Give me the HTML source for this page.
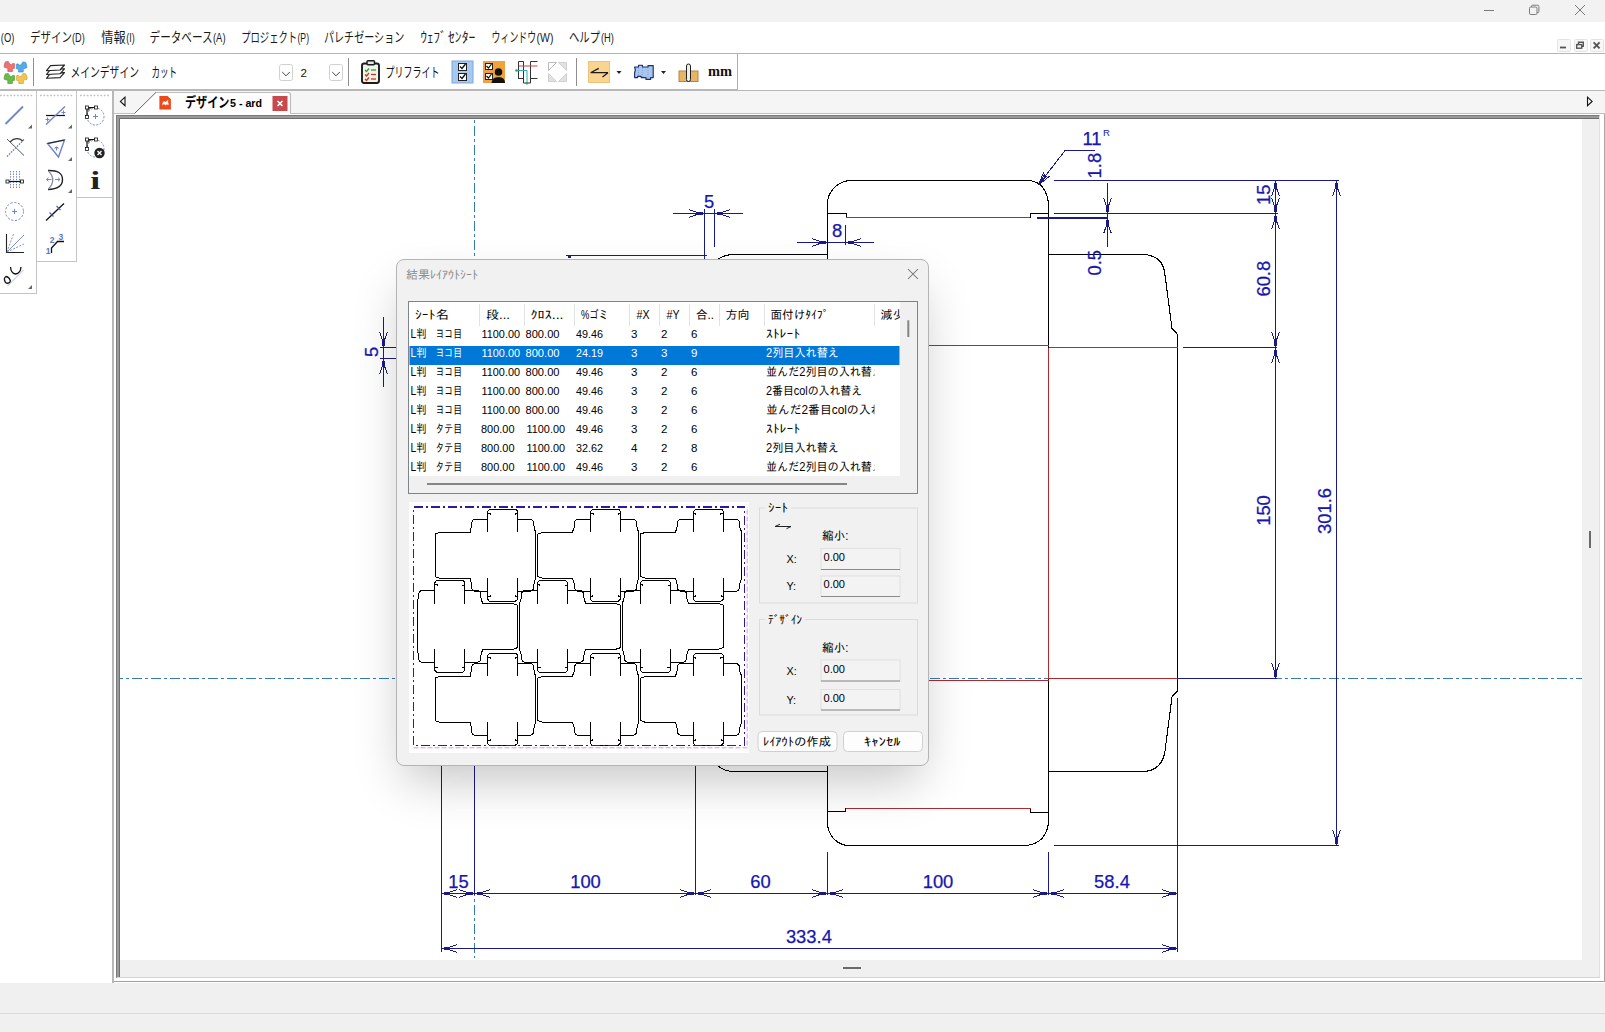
<!DOCTYPE html>
<html lang="ja"><head><meta charset="utf-8"><title>ArtiosCAD</title>
<style>
html,body{margin:0;padding:0;}
body{width:1605px;height:1032px;position:relative;overflow:hidden;background:#fff;font-family:"Liberation Sans","Noto Sans CJK JP",sans-serif;font-size:12px;color:#000;}
div,svg{position:absolute;box-sizing:border-box;}
svg{overflow:visible}
svg text{white-space:pre}
</style></head><body>

<div id="titlebar" style="left:0;top:0;width:1605px;height:22px;background:#f2f2f2"></div>
<div id="menubar" style="left:0;top:22px;width:1605px;height:32px;background:#fff;border-bottom:1px solid #b4b4b4"></div>
<div id="toolbar" style="left:0;top:54px;width:738px;height:37px;background:#fff;border-right:1px solid #b0b0b0;border-bottom:2px solid #b8b8b8"></div>
<div id="toolbar-r" style="left:738px;top:54px;width:867px;height:37px;background:#fff;border-bottom:1px solid #b8b8b8"></div>
<div id="lp1" style="left:0;top:91px;width:37px;height:203px;background:#fff;border-right:1px solid #c4c4c4;border-bottom:1px solid #c4c4c4"></div>
<div id="lp2" style="left:37px;top:91px;width:40px;height:171px;background:#fff;border-right:1px solid #c4c4c4;border-bottom:1px solid #c4c4c4"></div>
<div id="lp3" style="left:77px;top:91px;width:35px;height:107px;background:#fff;border-bottom:1px solid #c4c4c4"></div>
<div id="lpsep" style="left:112px;top:91px;width:2px;height:892px;background:#b8b8b8"></div>
<div id="tabstrip" style="left:114px;top:91px;width:1491px;height:23px;background:#f5f5f5;border-bottom:1px solid #c0c0c0"></div>
<div id="mdi" style="left:114px;top:114px;width:1491px;height:868px;background:#fff;border-right:1px solid #a8a8a8;border-bottom:1px solid #a0a0a0"></div>
<div id="frame" style="left:116px;top:115px;width:1484px;height:863px;background:#f0f0f0;border:1px solid #7a7a7a;border-right-color:#e0e0e0;border-bottom-color:#d4d4d4"></div>
<div id="frame2" style="left:117px;top:116px;width:1482px;height:861px;background:#f0f0f0;border-top:3px solid #9a9a9a;border-left:3px solid #9a9a9a"></div>
<div id="frame3" style="left:119px;top:118px;width:1480px;height:859px;background:#f0f0f0;border-top:1px solid #6e6e6e;border-left:1px solid #6e6e6e"></div>
<div id="canvas" style="left:120px;top:119px;width:1462px;height:841px;background:#fff;overflow:hidden"></div>
<div style="left:1589px;top:531px;width:2px;height:17px;background:#6a6a6a"></div>
<div style="left:843px;top:967px;width:18px;height:2px;background:#6a6a6a"></div>
<div id="status1" style="left:0;top:983px;width:1605px;height:31px;background:#f0f0f0;border-bottom:1px solid #d8d8d8"></div>
<div id="status2" style="left:0;top:1014px;width:1605px;height:18px;background:#f0f0f0"></div>
<svg id="chrome" width="1605" height="1032" viewBox="0 0 1605 1032" style="left:0;top:0"><g stroke="#7a7a7a" stroke-width="1" fill="none"><path d="M1484 10.5H1494"/><rect x="1529.5" y="7" width="7.5" height="7.5" rx="1.3"/><path d="M1531.5 7V6.3Q1531.5 5.2 1532.6 5.2H1537.7Q1538.9 5.2 1538.9 6.4V11.5Q1538.9 12.6 1537.8 12.6H1537"/><path d="M1575 5L1585 15M1585 5L1575 15"/></g>
<rect x="1557.5" y="39.5" width="13" height="12" rx="1" fill="#f7f7f7" stroke="#e4e4e4"/>
<rect x="1574.5" y="39.5" width="13" height="12" rx="1" fill="#f7f7f7" stroke="#e4e4e4"/>
<rect x="1590.5" y="39.5" width="13" height="12" rx="1" fill="#f7f7f7" stroke="#e4e4e4"/>
<rect x="1560" y="46.6" width="6" height="1.8" fill="#555"/>
<g fill="none" stroke="#555" stroke-width="1.4"><path d="M1578.5 44V42.2H1583.3V46.2H1581.8"/><rect x="1576.7" y="44.6" width="5" height="3.6"/></g>
<path d="M1593.6 42.4L1599.6 48.4M1599.6 42.4L1593.6 48.4" stroke="#555" stroke-width="1.9" fill="none"/>
<text x="0.8" y="41.8" font-size="12" fill="#1a1a1a" font-family='"Liberation Sans","Noto Sans CJK JP",sans-serif' font-weight="normal" text-anchor="start" textLength="13.5" lengthAdjust="spacingAndGlyphs">(O)</text>
<text x="30.0" y="41.8" font-size="13.5" fill="#1a1a1a" font-family='"Liberation Sans","Noto Sans CJK JP",sans-serif' font-weight="normal" text-anchor="start" textLength="42.0" lengthAdjust="spacingAndGlyphs">デザイン</text>
<text x="72.0" y="41.8" font-size="12" fill="#1a1a1a" font-family='"Liberation Sans","Noto Sans CJK JP",sans-serif' font-weight="normal" text-anchor="start" textLength="12.7" lengthAdjust="spacingAndGlyphs">(D)</text>
<text x="101.2" y="41.8" font-size="13.5" fill="#1a1a1a" font-family='"Liberation Sans","Noto Sans CJK JP",sans-serif' font-weight="normal" text-anchor="start" textLength="24.4" lengthAdjust="spacingAndGlyphs">情報</text>
<text x="126.2" y="41.8" font-size="12" fill="#1a1a1a" font-family='"Liberation Sans","Noto Sans CJK JP",sans-serif' font-weight="normal" text-anchor="start" textLength="8.4" lengthAdjust="spacingAndGlyphs">(I)</text>
<text x="149.6" y="41.8" font-size="13.5" fill="#1a1a1a" font-family='"Liberation Sans","Noto Sans CJK JP",sans-serif' font-weight="normal" text-anchor="start" textLength="63.0" lengthAdjust="spacingAndGlyphs">データベース</text>
<text x="213.0" y="41.8" font-size="12" fill="#1a1a1a" font-family='"Liberation Sans","Noto Sans CJK JP",sans-serif' font-weight="normal" text-anchor="start" textLength="12.5" lengthAdjust="spacingAndGlyphs">(A)</text>
<text x="241.2" y="41.8" font-size="13.5" fill="#1a1a1a" font-family='"Liberation Sans","Noto Sans CJK JP",sans-serif' font-weight="normal" text-anchor="start" textLength="56.0" lengthAdjust="spacingAndGlyphs">プロジェクト</text>
<text x="297.5" y="41.8" font-size="12" fill="#1a1a1a" font-family='"Liberation Sans","Noto Sans CJK JP",sans-serif' font-weight="normal" text-anchor="start" textLength="11.5" lengthAdjust="spacingAndGlyphs">(P)</text>
<text x="324.0" y="41.8" font-size="13.5" fill="#1a1a1a" font-family='"Liberation Sans","Noto Sans CJK JP",sans-serif' font-weight="normal" text-anchor="start" textLength="80.3" lengthAdjust="spacingAndGlyphs">パレチゼーション</text>
<text x="420.5" y="41.8" font-size="13.5" fill="#1a1a1a" font-family='"Liberation Sans","Noto Sans CJK JP",sans-serif' font-weight="normal" text-anchor="start" textLength="26.0" lengthAdjust="spacingAndGlyphs">ｳｪﾌﾞ</text>
<text x="448.0" y="41.8" font-size="13.5" fill="#1a1a1a" font-family='"Liberation Sans","Noto Sans CJK JP",sans-serif' font-weight="normal" text-anchor="start" textLength="27.4" lengthAdjust="spacingAndGlyphs">ｾﾝﾀｰ</text>
<text x="491.6" y="41.8" font-size="13.5" fill="#1a1a1a" font-family='"Liberation Sans","Noto Sans CJK JP",sans-serif' font-weight="normal" text-anchor="start" textLength="44.5" lengthAdjust="spacingAndGlyphs">ウィンドウ</text>
<text x="536.6" y="41.8" font-size="12" fill="#1a1a1a" font-family='"Liberation Sans","Noto Sans CJK JP",sans-serif' font-weight="normal" text-anchor="start" textLength="16.8" lengthAdjust="spacingAndGlyphs">(W)</text>
<text x="569.0" y="41.8" font-size="13.5" fill="#1a1a1a" font-family='"Liberation Sans","Noto Sans CJK JP",sans-serif' font-weight="normal" text-anchor="start" textLength="31.0" lengthAdjust="spacingAndGlyphs">ヘルプ</text>
<text x="601.0" y="41.8" font-size="12" fill="#1a1a1a" font-family='"Liberation Sans","Noto Sans CJK JP",sans-serif' font-weight="normal" text-anchor="start" textLength="13.0" lengthAdjust="spacingAndGlyphs">(H)</text>
<path d="M4.2 65.3L5.3 61.9L8.3 61.5L9.8 64.3L11.8 64.7L12.8 63.3L14.6 63.7L14.6 68.3L12.4 68.7L12.4 71.5L7.8 71.5L7.8 68.3L4.2 67.3Z" fill="#ea7472" stroke="#d05c5c" stroke-width="0.7" stroke-linejoin="round"/>
<path d="M26.8 65.8L25.7 62.4L22.7 62.0L21.2 64.8L19.2 65.2L18.2 63.8L16.4 64.2L16.4 68.8L18.6 69.2L18.6 72.0L23.2 72.0L23.2 68.8L26.8 67.8Z" fill="#56aae8" stroke="#3c8fd0" stroke-width="0.7" stroke-linejoin="round"/>
<path d="M4.2 77.3L5.3 73.9L8.3 73.5L9.8 76.3L11.8 76.7L12.8 75.3L14.6 75.7L14.6 80.3L12.4 80.7L12.4 83.5L7.8 83.5L7.8 80.3L4.2 79.3Z" fill="#6cba4a" stroke="#529c34" stroke-width="0.7" stroke-linejoin="round"/>
<path d="M27.0 77.3L25.9 73.9L22.9 73.5L21.4 76.3L19.4 76.7L18.4 75.3L16.6 75.7L16.6 80.3L18.8 80.7L18.8 83.5L23.4 83.5L23.4 80.3L27.0 79.3Z" fill="#f2c452" stroke="#d0a238" stroke-width="0.7" stroke-linejoin="round"/>
<path d="M33.5 58V86" stroke="#8e8e8e"/>
<path d="M50.5 73.19999999999999L64.5 72.6L60 77.6L46.5 78.3Z" fill="#fff" stroke="#222" stroke-width="1.15" stroke-linejoin="round"/>
<path d="M50.5 69.39999999999999L64.5 68.8L60 73.8L46.5 74.5Z" fill="#fff" stroke="#222" stroke-width="1.15" stroke-linejoin="round"/>
<path d="M50.5 65.6L64.5 65.0L60 70.0L46.5 70.7Z" fill="#fff" stroke="#222" stroke-width="1.15" stroke-linejoin="round"/>
<text x="70.4" y="77.0" font-size="13.5" fill="#111" font-family='"Liberation Sans","Noto Sans CJK JP",sans-serif' font-weight="normal" text-anchor="start" textLength="68.6" lengthAdjust="spacingAndGlyphs">メインデザイン</text>
<text x="151.4" y="77.0" font-size="13.5" fill="#111" font-family='"Liberation Sans","Noto Sans CJK JP",sans-serif' font-weight="normal" text-anchor="start" textLength="25.6" lengthAdjust="spacingAndGlyphs">カット</text>
<rect x="279.5" y="64.5" width="13" height="16" rx="2" fill="#fff" stroke="#d0d0d0"/><path d="M282.2 72L286 75.8L289.8 72" fill="none" stroke="#444" stroke-width="1"/>
<rect x="329.5" y="64.5" width="13" height="16" rx="2" fill="#fff" stroke="#d0d0d0"/><path d="M332.2 72L336 75.8L339.8 72" fill="none" stroke="#444" stroke-width="1"/>
<text x="300.6" y="77.0" font-size="11.5" fill="#111" font-family='"Liberation Sans","Noto Sans CJK JP",sans-serif' font-weight="normal" text-anchor="start">2</text>
<path d="M348.5 58V86" stroke="#8e8e8e"/>
<g><rect x="362" y="63.5" width="17" height="19.5" rx="2.2" fill="#f1f3e8" stroke="#1c1c1c" stroke-width="1.9"/><rect x="367" y="60.8" width="7.5" height="4" rx="1" fill="#e4e4e4" stroke="#1c1c1c" stroke-width="1.5"/><path d="M365 70l1.5 1.5l2.5-3" stroke="#2a9a3a" stroke-width="1.3" fill="none"/><path d="M371 70h5" stroke="#2a9a3a" stroke-width="1.3"/><path d="M365 74.5l1.5 1.5l2.5-3" stroke="#d03020" stroke-width="1.3" fill="none"/><path d="M371 74.5h5" stroke="#d03020" stroke-width="1.3"/><path d="M365 79l1.5 1.5l2.5-3" stroke="#d03020" stroke-width="1.3" fill="none"/><path d="M371 79h5" stroke="#d03020" stroke-width="1.3"/></g>
<text x="385.6" y="77.0" font-size="13.5" fill="#111" font-family='"Liberation Sans","Noto Sans CJK JP",sans-serif' font-weight="normal" text-anchor="start" textLength="53.8" lengthAdjust="spacingAndGlyphs">プリフライト</text>
<rect x="452" y="61" width="21" height="22" fill="#a9c8ee" stroke="#7aa6dc" stroke-width="1"/><g fill="#fff" stroke="#222" stroke-width="1"><rect x="458.5" y="63.5" width="8" height="7"/><rect x="458.5" y="73.5" width="8" height="7"/></g><path d="M460 66.5l2 2l3.5-4.5M460 76.5l2 2l3.5-4.5" stroke="#111" stroke-width="1.3" fill="none"/>
<rect x="483" y="61" width="22" height="22" fill="#f2a23c"/><g fill="#fff" stroke="#222" stroke-width="1"><rect x="485.5" y="63.5" width="7" height="6"/><rect x="485.5" y="73.5" width="7" height="6"/></g><path d="M486.5 66l2 2l3-4M486.5 76l2 2l3-4" stroke="#111" stroke-width="1.2" fill="none"/><circle cx="498.5" cy="72" r="3.8" fill="#111"/><path d="M491.5 83Q492 77 498.5 77Q505 77 505 83Z" fill="#111"/>
<g fill="none" stroke-width="1"><path d="M518.5 61.5V79M523.5 61.5V83M530.5 61.5V83M518.5 61.5H523.5M530.5 61.5H537.5M518.5 78.5H523.5M530.5 78.5H537.5M523.5 83H530.5" stroke="#333"/><path d="M518.5 66H537.5" stroke="#d04040"/><path d="M516 70.5H527V83" stroke="#30a8b8"/><circle cx="516.5" cy="70.5" r="1.3" fill="#2aaa4a" stroke="none"/><circle cx="527" cy="83.3" r="1.3" fill="#2aaa4a" stroke="none"/></g>
<g fill="#e2e2e2" stroke="#c6c6c6" stroke-width="0.8"><path d="M548.5 62.5h8l-8 8Z" fill="#fff" stroke="#aaa"/><path d="M566.5 62.5v8l-8-8Z"/><path d="M548.5 81.5v-8l8 8Z"/><path d="M566.5 81.5h-8l8-8Z"/></g>
<path d="M576.5 58V86" stroke="#8e8e8e"/>
<rect x="588.5" y="61.5" width="21" height="21" fill="#fad58f" stroke="#eec27a" stroke-width="1"/><path d="M590.6 72.7H608M590.6 72.7L598.7 68.4M608 72.7L602.5 77.1" stroke="#1c1c1c" stroke-width="1.3" fill="none"/>
<path d="M616.5 71h5l-2.5 3Z" fill="#222"/>
<path d="M634.6 67H638.5V65.2H642.5V67H648V65.6H653.2V77.6H650.6V79.4H646V77.6H641.2V76.4H637.6V77.6H634.6V72.5L635.4 70Z" fill="#a9c6ec" stroke="#1e2e6e" stroke-width="1.15" stroke-linejoin="round"/><path d="M638.5 68V76M642.5 68V77M648 68V77" stroke="#7fa3d8" stroke-width="0.8" stroke-dasharray="1 1"/>
<path d="M661 71h5l-2.5 3Z" fill="#222"/>
<rect x="679" y="71" width="19" height="10.5" fill="#e6b56a" stroke="#b8863a" stroke-width="1"/><rect x="686.5" y="64" width="4" height="17.5" rx="2" fill="#f0efe6" stroke="#222" stroke-width="1"/>
<text x="708.0" y="76.2" font-size="15.5" fill="#111" font-family='"Liberation Serif",serif' font-weight="bold" text-anchor="start" textLength="24.0" lengthAdjust="spacingAndGlyphs">mm</text>
<path d="M0 95.5H34" stroke="#c0c0c0" stroke-width="1.6" stroke-dasharray="1.7 1.7"/>
<path d="M40 95.5H74" stroke="#c0c0c0" stroke-width="1.6" stroke-dasharray="1.7 1.7"/>
<path d="M80 95.5H110" stroke="#c0c0c0" stroke-width="1.6" stroke-dasharray="1.7 1.7"/>
<path d="M5.5 124L23 106.5" stroke="#6f86c8" stroke-width="1.8"/>
<path d="M32 128.5v-4l-4 4Z" fill="#666"/>
<path d="M7 139L24 155.5" stroke="#444" stroke-width="0.9"/><path d="M7 156.5L24 139.5" stroke="#5a74c4" stroke-width="1.3" stroke-dasharray="1.6 1.2"/><path d="M10 142Q16 136 23 141" stroke="#333" stroke-width="1.2" fill="none"/>
<path d="M10.5 171V189M13.5 171V189M16.5 171V189M19.5 171V189" stroke="#6f86c8" stroke-width="1" stroke-dasharray="1.4 1.2"/><path d="M7 181.5H22" stroke="#111" stroke-width="1.2"/><rect x="6" y="180" width="3" height="3" fill="#fff" stroke="#111" stroke-width="0.8"/><rect x="20.5" y="180" width="3" height="3" fill="#fff" stroke="#111" stroke-width="0.8"/>
<circle cx="14.5" cy="211.5" r="9" fill="none" stroke="#6f86c8" stroke-width="1" stroke-dasharray="2.2 1.6"/><path d="M12 211.5h5M14.5 209v5" stroke="#6f86c8" stroke-width="1"/>
<path d="M6.5 234V252.5H24" stroke="#222" stroke-width="1.1" fill="none"/><path d="M7 252L24 235" stroke="#6f86c8" stroke-width="0.9"/><path d="M7 252L13.5 234M7 252L24 244" stroke="#6f86c8" stroke-width="0.9" stroke-dasharray="2 1.4"/>
<path d="M10.5 267Q11 273.5 15.5 274Q20.5 273.5 21 267" stroke="#111" stroke-width="1.3" fill="none"/><path d="M10.5 281.5Q9.5 277 6 276.5Q3 278 5.5 282.5Q8 284.5 10.5 281.5" stroke="#111" stroke-width="1.3" fill="none"/><path d="M8 285.5L24 269.5" stroke="#6f86c8" stroke-width="1" stroke-dasharray="1.6 1.2"/>
<path d="M32 289v-4l-4 4Z" fill="#666"/>
<path d="M46 115.5H65" stroke="#111" stroke-width="1.2"/><path d="M46 124.5L65 106.5" stroke="#6f86c8" stroke-width="1.4"/><path d="M61.5 112.5h4M63.5 110.5v4M45.5 119.5h4M47.5 117.5v4" stroke="#6f86c8" stroke-width="1"/>
<path d="M72 128.5v-4l-4 4Z" fill="#666"/>
<path d="M47.5 143.5L64.5 140L58.5 157Z" fill="none" stroke="#6f86c8" stroke-width="1.4"/><path d="M47.5 143.5L64.5 140" stroke="#222" stroke-width="1.2"/><path d="M54.5 148.5q2-2.5 4 0M56.5 146.5v4" stroke="#6f86c8" stroke-width="1.1" fill="none"/>
<path d="M72 161v-4l-4 4Z" fill="#666"/>
<path d="M48 170.5Q62.5 170 62.5 179.5Q62.5 189 48 189.5" stroke="#222" stroke-width="1.4" fill="none"/><path d="M48.5 171Q57 180 48.5 189" stroke="#8a8fa8" stroke-width="1.3" fill="none"/><path d="M46.5 179.5h5M46.5 179.5l2-1.8M46.5 179.5l2 1.8M55 179.5h5M60 179.5l-2-1.8M60 179.5l-2 1.8" stroke="#6f86c8" stroke-width="1" fill="none"/>
<path d="M72 193v-4l-4 4Z" fill="#666"/>
<path d="M46 220.5L64 203.5" stroke="#111" stroke-width="1.3"/><path d="M49.5 212.5l4 4M56.5 206l4 4" stroke="#4a62c4" stroke-width="1.2"/>
<path d="M51.5 253V248L57.5 241.5H64" stroke="#111" stroke-width="1.3" fill="none"/>
<text x="45.8" y="254.0" font-size="8.5" fill="#5a76cc" font-family='"Liberation Sans",sans-serif' font-weight="bold" text-anchor="start">1</text>
<text x="49.8" y="243.3" font-size="8.5" fill="#5a76cc" font-family='"Liberation Sans",sans-serif' font-weight="bold" text-anchor="start">2</text>
<text x="58.5" y="240.3" font-size="8.5" fill="#5a76cc" font-family='"Liberation Sans",sans-serif' font-weight="bold" text-anchor="start">3</text>
<circle cx="95.5" cy="116.5" r="8.5" fill="none" stroke="#6f86c8" stroke-width="1" stroke-dasharray="2 1.5"/><path d="M87 116.0V107.5H95.5" stroke="#111" stroke-width="1.2" fill="none"/><path d="M87.5 112.5Q88.5 109.0 92 108.0L87.5 108.0Z" fill="#555"/><rect x="85.5" y="106.0" width="3" height="3" fill="#fff" stroke="#111" stroke-width="0.8"/><rect x="94.5" y="106.0" width="3" height="3" fill="#fff" stroke="#111" stroke-width="0.8"/><rect x="85.5" y="115.5" width="3" height="3" fill="#fff" stroke="#111" stroke-width="0.8"/>
<path d="M93 116.5h5M95.5 114v5" stroke="#6f86c8" stroke-width="1"/>
<circle cx="95.5" cy="148.5" r="8.5" fill="none" stroke="#6f86c8" stroke-width="1" stroke-dasharray="2 1.5"/><path d="M87 148.0V139.5H95.5" stroke="#111" stroke-width="1.2" fill="none"/><path d="M87.5 144.5Q88.5 141.0 92 140.0L87.5 140.0Z" fill="#555"/><rect x="85.5" y="138.0" width="3" height="3" fill="#fff" stroke="#111" stroke-width="0.8"/><rect x="94.5" y="138.0" width="3" height="3" fill="#fff" stroke="#111" stroke-width="0.8"/><rect x="85.5" y="147.5" width="3" height="3" fill="#fff" stroke="#111" stroke-width="0.8"/>
<circle cx="99.5" cy="153" r="5.2" fill="#222"/><path d="M97.5 151l4 4M101.5 151l-4 4" stroke="#fff" stroke-width="1.4"/>
<text x="90.3" y="189.0" font-size="26" fill="#222" font-family='"Liberation Serif",serif' font-weight="bold" text-anchor="start" textLength="10.0" lengthAdjust="spacingAndGlyphs">i</text>
<path d="M134.5 114L156 92.5H288Q290.5 92.5 290.5 95V114Z" fill="#fdfdfd"/><path d="M156 92.5H288Q290.5 92.5 290.5 95V113.5" fill="none" stroke="#bdbdbd" stroke-width="1.2"/><path d="M134.7 113.3L156 92.3" stroke="#555" stroke-width="0.9" fill="none"/>
<path d="M125 97.2L120.4 101.4L125 105.7Z" fill="none" stroke="#111" stroke-width="1.1"/>
<path d="M1587.5 97.2L1592.1 101.4L1587.5 105.7Z" fill="none" stroke="#111" stroke-width="1.1"/>
<path d="M159.4 96H167.6L170.9 99.3V109.6H159.4Z" fill="#ee4a18"/><path d="M162.3 105.5q-0.3-3.5 2-4.5q0.6 1.8 1.8 0.6q0.8-1.2 2.2-1.6q-0.6 2.2 0.2 3.4q0.3 1.2-0.6 2.1q-0.2-1.3-1-1.3q-0.9 0.4-1.1 1.6q-0.8-1.6-1.6-1.5q-1.2 0.1-1.9 1.2Z" fill="#fff"/>
<text x="185.0" y="107.3" font-size="14" fill="#000" font-family='"Liberation Sans","Noto Sans CJK JP",sans-serif' font-weight="bold" text-anchor="start" textLength="44.4" lengthAdjust="spacingAndGlyphs">デザイン</text>
<text x="230.0" y="107.3" font-size="11" fill="#000" font-family='"Liberation Sans","Noto Sans CJK JP",sans-serif' font-weight="bold" text-anchor="start" textLength="32.0" lengthAdjust="spacingAndGlyphs">5 - ard</text>
<rect x="272.5" y="96" width="15" height="15" fill="#c8494d"/><path d="M277.5 101l5 5M282.5 101l-5 5" stroke="#fff" stroke-width="1.6"/></svg>
<svg id="drawing" width="1462" height="841" viewBox="120 119 1462 841" shape-rendering="crispEdges" style="left:120px;top:119px;overflow:hidden"><path d="M474.5 120V958" stroke="#357bb0" stroke-width="1.1" stroke-dasharray="2.5 3.5 10 3" fill="none"/>
<path d="M120 678.5H1582" stroke="#357bb0" stroke-width="1.1" stroke-dasharray="2.5 3.5 10 3" stroke-dashoffset="-6" fill="none"/>
<path d="M474.5 347.5L698.6 347.5L698.6 334.3L704.3 328.4L711.7 272Q714 256 731.9 254.5L827.5 254.5L827.5 204A24 23.5 0 0 1 851.6 180.5L1030 180.5Q1046 183 1048.5 203L1048.5 254.5L1144.4 254.5Q1162 256 1164.6 272L1172 328.4L1177.5 334.3L1177.5 691L1172 696.8L1165 751Q1162 770 1144.8 771.5L1048.5 771.5L1048.5 822.8Q1046 843 1026.6 845.5L849 845.5A21.5 23 0 0 1 827.5 822L827.5 771.5L731.9 771.5Q714 770 711.7 751L704.3 696.8L698.6 691L698.6 678.5L474.5 678.5L441.5 667.5L441.5 358.5Z" fill="none" stroke="#000" stroke-width="1.1"/>
<path d="M827.5 254.5V347.5M1048.5 254.5V347.5M827.5 678.5V771.5M1048.5 678.5V771.5M827.5 213.5H846.5V217.5M1048.5 213.5H1030.5V217.5M827.5 811.5H845.5V808M1048.5 812.5H1030.5V808" fill="none" stroke="#000" stroke-width="1.1"/>
<path d="M474.5 347.5V678.5M695.5 347.5V678.5M827.5 347.5V678.5M1048.5 347.5V678.5M695.5 347.5H827.5M695.5 678.5H827.5M827.5 345.5H1048.5M1048.5 347.5H1177.5M827.5 680.5H1048.5M1048.5 678.5H1177.5M846 217.5H1030M845.5 808.5H1030.5" fill="none" stroke="#b02a2e" stroke-width="1.1"/>
<g stroke="#1a1a86" stroke-width="1" fill="none"><path d="M474.5 700V895"/><path d="M695.5 700V895"/><path d="M441.5 700V951.6"/><path d="M827.5 852V895"/><path d="M1048.5 852V895"/><path d="M1177.5 698V951.6"/><path d="M441.5 893.5H1177.5"/><path d="M441.5 948.5H1177.5"/><g transform="translate(441.5 893.5) rotate(180)"><path d="M-6.2 0H-2" stroke-width="2.7"/><path d="M-15.3 -3.7L-4.5 0L-15.3 3.7" fill="none"/></g><g transform="translate(474.5 893.5) rotate(0)"><path d="M-6.2 0H-2" stroke-width="2.7"/><path d="M-15.3 -3.7L-4.5 0L-15.3 3.7" fill="none"/></g><g transform="translate(474.5 893.5) rotate(180)"><path d="M-6.2 0H-2" stroke-width="2.7"/><path d="M-15.3 -3.7L-4.5 0L-15.3 3.7" fill="none"/></g><g transform="translate(695.5 893.5) rotate(0)"><path d="M-6.2 0H-2" stroke-width="2.7"/><path d="M-15.3 -3.7L-4.5 0L-15.3 3.7" fill="none"/></g><g transform="translate(695.5 893.5) rotate(180)"><path d="M-6.2 0H-2" stroke-width="2.7"/><path d="M-15.3 -3.7L-4.5 0L-15.3 3.7" fill="none"/></g><g transform="translate(827.5 893.5) rotate(0)"><path d="M-6.2 0H-2" stroke-width="2.7"/><path d="M-15.3 -3.7L-4.5 0L-15.3 3.7" fill="none"/></g><g transform="translate(827.5 893.5) rotate(180)"><path d="M-6.2 0H-2" stroke-width="2.7"/><path d="M-15.3 -3.7L-4.5 0L-15.3 3.7" fill="none"/></g><g transform="translate(1048.5 893.5) rotate(0)"><path d="M-6.2 0H-2" stroke-width="2.7"/><path d="M-15.3 -3.7L-4.5 0L-15.3 3.7" fill="none"/></g><g transform="translate(1048.5 893.5) rotate(180)"><path d="M-6.2 0H-2" stroke-width="2.7"/><path d="M-15.3 -3.7L-4.5 0L-15.3 3.7" fill="none"/></g><g transform="translate(1177.5 893.5) rotate(0)"><path d="M-6.2 0H-2" stroke-width="2.7"/><path d="M-15.3 -3.7L-4.5 0L-15.3 3.7" fill="none"/></g><g transform="translate(441.5 948.5) rotate(180)"><path d="M-6.2 0H-2" stroke-width="2.7"/><path d="M-15.3 -3.7L-4.5 0L-15.3 3.7" fill="none"/></g><g transform="translate(1177.5 948.5) rotate(0)"><path d="M-6.2 0H-2" stroke-width="2.7"/><path d="M-15.3 -3.7L-4.5 0L-15.3 3.7" fill="none"/></g><path d="M1054 180.5H1338.5"/><path d="M1054 213.5H1277.5"/><path d="M1183 347.5H1277"/><path d="M1177.5 678.5H1277"/><path d="M1054 845.5H1338.5"/><path d="M1275.5 180.5V678.5"/><path d="M1336.5 180.5V845.5"/><g transform="translate(1275.5 180.5) rotate(-90)"><path d="M-6.2 0H-2" stroke-width="2.7"/><path d="M-15.3 -3.7L-4.5 0L-15.3 3.7" fill="none"/></g><g transform="translate(1275.5 213.5) rotate(90)"><path d="M-6.2 0H-2" stroke-width="2.7"/><path d="M-15.3 -3.7L-4.5 0L-15.3 3.7" fill="none"/></g><g transform="translate(1275.5 213.5) rotate(-90)"><path d="M-6.2 0H-2" stroke-width="2.7"/><path d="M-15.3 -3.7L-4.5 0L-15.3 3.7" fill="none"/></g><g transform="translate(1275.5 347.5) rotate(90)"><path d="M-6.2 0H-2" stroke-width="2.7"/><path d="M-15.3 -3.7L-4.5 0L-15.3 3.7" fill="none"/></g><g transform="translate(1275.5 347.5) rotate(-90)"><path d="M-6.2 0H-2" stroke-width="2.7"/><path d="M-15.3 -3.7L-4.5 0L-15.3 3.7" fill="none"/></g><g transform="translate(1275.5 678.5) rotate(90)"><path d="M-6.2 0H-2" stroke-width="2.7"/><path d="M-15.3 -3.7L-4.5 0L-15.3 3.7" fill="none"/></g><g transform="translate(1336.5 180.5) rotate(-90)"><path d="M-6.2 0H-2" stroke-width="2.7"/><path d="M-15.3 -3.7L-4.5 0L-15.3 3.7" fill="none"/></g><g transform="translate(1336.5 845.5) rotate(90)"><path d="M-6.2 0H-2" stroke-width="2.7"/><path d="M-15.3 -3.7L-4.5 0L-15.3 3.7" fill="none"/></g><path d="M1107.5 183V246.6"/><path d="M1037 218H1107.5" stroke-width="2"/><g transform="translate(1107.5 213.5) rotate(90)"><path d="M-6.2 0H-2" stroke-width="2.7"/><path d="M-15.3 -3.7L-4.5 0L-15.3 3.7" fill="none"/></g><g transform="translate(1107.5 217.8) rotate(-90)"><path d="M-6.2 0H-2" stroke-width="2.7"/><path d="M-15.3 -3.7L-4.5 0L-15.3 3.7" fill="none"/></g><path d="M1038.4 185L1065 150.5H1094.7" fill="none"/><g transform="translate(1038.4 185) rotate(127.2)"><path d="M-14 -3.6L0 0L-14 3.6M-13 -1.5L0 0L-13 1.5" fill="none"/></g><path d="M797 242.5H874"/><path d="M845.5 225V245"/><g transform="translate(827.5 242.5) rotate(0)"><path d="M-6.2 0H-2" stroke-width="2.7"/><path d="M-15.3 -3.7L-4.5 0L-15.3 3.7" fill="none"/></g><g transform="translate(845.5 242.5) rotate(180)"><path d="M-6.2 0H-2" stroke-width="2.7"/><path d="M-15.3 -3.7L-4.5 0L-15.3 3.7" fill="none"/></g><path d="M673 213.5H743"/><path d="M704.5 209V259"/><path d="M714.5 209V247"/><g transform="translate(704.5 213.5) rotate(0)"><path d="M-6.2 0H-2" stroke-width="2.7"/><path d="M-15.3 -3.7L-4.5 0L-15.3 3.7" fill="none"/></g><g transform="translate(714.5 213.5) rotate(180)"><path d="M-6.2 0H-2" stroke-width="2.7"/><path d="M-15.3 -3.7L-4.5 0L-15.3 3.7" fill="none"/></g><path d="M566 255.5H706.5"/><path d="M568 255h3v3.2h-3Z" fill="#1a1a86" stroke="none"/><path d="M383.5 317V386.8"/><path d="M379.5 347.5H397M379.5 358.5H397"/><g transform="translate(383.5 347.5) rotate(90)"><path d="M-6.2 0H-2" stroke-width="2.7"/><path d="M-15.3 -3.7L-4.5 0L-15.3 3.7" fill="none"/></g><g transform="translate(383.5 358.5) rotate(-90)"><path d="M-6.2 0H-2" stroke-width="2.7"/><path d="M-15.3 -3.7L-4.5 0L-15.3 3.7" fill="none"/></g></g>
<text transform="translate(458.5 888)" font-size="18.4" fill="#1616b0" font-family='"Liberation Sans",sans-serif' text-anchor="middle" stroke="#1616b0" stroke-width="0.25">15</text>
<text transform="translate(585.5 888)" font-size="18.4" fill="#1616b0" font-family='"Liberation Sans",sans-serif' text-anchor="middle" stroke="#1616b0" stroke-width="0.25">100</text>
<text transform="translate(760.5 888)" font-size="18.4" fill="#1616b0" font-family='"Liberation Sans",sans-serif' text-anchor="middle" stroke="#1616b0" stroke-width="0.25">60</text>
<text transform="translate(938 888)" font-size="18.4" fill="#1616b0" font-family='"Liberation Sans",sans-serif' text-anchor="middle" stroke="#1616b0" stroke-width="0.25">100</text>
<text transform="translate(1112 888)" font-size="18.4" fill="#1616b0" font-family='"Liberation Sans",sans-serif' text-anchor="middle" stroke="#1616b0" stroke-width="0.25">58.4</text>
<text transform="translate(808.9 942.5)" font-size="18.4" fill="#1616b0" font-family='"Liberation Sans",sans-serif' text-anchor="middle" stroke="#1616b0" stroke-width="0.25">333.4</text>
<text transform="translate(1269.8 194.8) rotate(-90)" font-size="18.4" fill="#1616b0" font-family='"Liberation Sans",sans-serif' text-anchor="middle" stroke="#1616b0" stroke-width="0.25">15</text>
<text transform="translate(1269.5 278.7) rotate(-90)" font-size="18.4" fill="#1616b0" font-family='"Liberation Sans",sans-serif' text-anchor="middle" stroke="#1616b0" stroke-width="0.25">60.8</text>
<text transform="translate(1269.5 510.5) rotate(-90)" font-size="18.4" fill="#1616b0" font-family='"Liberation Sans",sans-serif' text-anchor="middle" stroke="#1616b0" stroke-width="0.25">150</text>
<text transform="translate(1331 511) rotate(-90)" font-size="18.4" fill="#1616b0" font-family='"Liberation Sans",sans-serif' text-anchor="middle" stroke="#1616b0" stroke-width="0.25">301.6</text>
<text transform="translate(1100.7 165.6) rotate(-90)" font-size="18.4" fill="#1616b0" font-family='"Liberation Sans",sans-serif' text-anchor="middle" stroke="#1616b0" stroke-width="0.25">1.8</text>
<text transform="translate(1101.3 262.7) rotate(-90)" font-size="18.4" fill="#1616b0" font-family='"Liberation Sans",sans-serif' text-anchor="middle" stroke="#1616b0" stroke-width="0.25">0.5</text>
<text transform="translate(378 352) rotate(-90)" font-size="18.4" fill="#1616b0" font-family='"Liberation Sans",sans-serif' text-anchor="middle" stroke="#1616b0" stroke-width="0.25">5</text>
<text transform="translate(709 207.7)" font-size="18.4" fill="#1616b0" font-family='"Liberation Sans",sans-serif' text-anchor="middle" stroke="#1616b0" stroke-width="0.25">5</text>
<text transform="translate(837 237)" font-size="18.4" fill="#1616b0" font-family='"Liberation Sans",sans-serif' text-anchor="middle" stroke="#1616b0" stroke-width="0.25">8</text>
<text transform="translate(1092 144.7)" font-size="18.4" fill="#1616b0" font-family='"Liberation Sans",sans-serif' text-anchor="middle" stroke="#1616b0" stroke-width="0.25">11</text>
<text x="1103" y="136.2" font-size="9.5" fill="#1616b0" font-family='"Liberation Sans",sans-serif'>R</text></svg>
<div id="dialog" style="left:396px;top:259px;width:533px;height:507px;background:#f1f1f1;border:1px solid #b4b4b4;border-radius:8px;box-shadow:0 22px 46px -8px rgba(0,0,0,0.23)"></div>
<svg id="dlgc" width="1605" height="1032" viewBox="0 0 1605 1032" style="left:0;top:0"><text x="406.0" y="279.0" font-size="12" fill="#8c8c8c" font-family='"Liberation Sans","IPAGothic","Noto Sans CJK JP",sans-serif' font-weight="normal" text-anchor="start" textLength="72.0" lengthAdjust="spacingAndGlyphs">結果ﾚｲｱｳﾄｼｰﾄ</text>
<path d="M908 269L918 279M918 269L908 279" stroke="#707070" stroke-width="1.05"/>
<rect x="408.5" y="301.5" width="509" height="192" fill="#f0f0f0" stroke="#7e848c"/>
<rect x="409" y="302" width="491" height="174" fill="#fff"/>
<rect x="907.3" y="320.3" width="2" height="16.7" fill="#858585"/>
<rect x="427" y="483" width="420" height="2" fill="#858585"/>
<path d="M479.5 304V326" stroke="#e2e2e2"/>
<path d="M524.5 304V326" stroke="#e2e2e2"/>
<path d="M574.5 304V326" stroke="#e2e2e2"/>
<path d="M629.5 304V326" stroke="#e2e2e2"/>
<path d="M659.5 304V326" stroke="#e2e2e2"/>
<path d="M689.5 304V326" stroke="#e2e2e2"/>
<path d="M719.5 304V326" stroke="#e2e2e2"/>
<path d="M764.5 304V326" stroke="#e2e2e2"/>
<path d="M874.5 304V326" stroke="#e2e2e2"/>
<text x="415.0" y="318.7" font-size="12" fill="#000" font-family='"Liberation Sans","IPAGothic","Noto Sans CJK JP",sans-serif' font-weight="normal" text-anchor="start" textLength="34.0" lengthAdjust="spacingAndGlyphs">ｼｰﾄ名</text>
<text x="486.0" y="318.7" font-size="12" fill="#000" font-family='"Liberation Sans","IPAGothic","Noto Sans CJK JP",sans-serif' font-weight="normal" text-anchor="start" textLength="24.0" lengthAdjust="spacingAndGlyphs">段...</text>
<text x="530.5" y="318.7" font-size="12" fill="#000" font-family='"Liberation Sans","IPAGothic","Noto Sans CJK JP",sans-serif' font-weight="normal" text-anchor="start" textLength="33.0" lengthAdjust="spacingAndGlyphs">ｸﾛｽ...</text>
<text x="581.0" y="318.7" font-size="12" fill="#000" font-family='"Liberation Sans","IPAGothic","Noto Sans CJK JP",sans-serif' font-weight="normal" text-anchor="start" textLength="27.0" lengthAdjust="spacingAndGlyphs">%ゴミ</text>
<text x="636.5" y="318.7" font-size="12" fill="#000" font-family='"Liberation Sans","IPAGothic","Noto Sans CJK JP",sans-serif' font-weight="normal" text-anchor="start" textLength="13.0" lengthAdjust="spacingAndGlyphs">#X</text>
<text x="666.5" y="318.7" font-size="12" fill="#000" font-family='"Liberation Sans","IPAGothic","Noto Sans CJK JP",sans-serif' font-weight="normal" text-anchor="start" textLength="13.0" lengthAdjust="spacingAndGlyphs">#Y</text>
<text x="696.0" y="318.7" font-size="12" fill="#000" font-family='"Liberation Sans","IPAGothic","Noto Sans CJK JP",sans-serif' font-weight="normal" text-anchor="start" textLength="18.0" lengthAdjust="spacingAndGlyphs">合..</text>
<text x="725.5" y="318.7" font-size="12" fill="#000" font-family='"Liberation Sans","IPAGothic","Noto Sans CJK JP",sans-serif' font-weight="normal" text-anchor="start" textLength="24.0" lengthAdjust="spacingAndGlyphs">方向</text>
<text x="770.5" y="318.7" font-size="12" fill="#000" font-family='"Liberation Sans","IPAGothic","Noto Sans CJK JP",sans-serif' font-weight="normal" text-anchor="start" textLength="58.0" lengthAdjust="spacingAndGlyphs">面付けﾀｲﾌﾟ</text>
<clipPath id="cl1"><rect x="409" y="302" width="491" height="174"/></clipPath>
<g clip-path="url(#cl1)"><text x="880.5" y="318.7" font-size="12" fill="#000" font-family='"Liberation Sans","IPAGothic","Noto Sans CJK JP",sans-serif' font-weight="normal" text-anchor="start" textLength="24.0" lengthAdjust="spacingAndGlyphs">減少</text></g>
<clipPath id="cl2"><rect x="409" y="302" width="465.5" height="174"/></clipPath>
<rect x="409.5" y="346" width="490" height="19" fill="#0078d7"/>
<text x="410.5" y="338.3" font-size="12" fill="#000" font-family='"Liberation Sans","IPAGothic","Noto Sans CJK JP",sans-serif' font-weight="normal" text-anchor="start" textLength="16.0" lengthAdjust="spacingAndGlyphs">L判</text>
<text x="435.5" y="338.3" font-size="12" fill="#000" font-family='"Liberation Sans","IPAGothic","Noto Sans CJK JP",sans-serif' font-weight="normal" text-anchor="start" textLength="26.5" lengthAdjust="spacingAndGlyphs">ヨコ目</text>
<text x="481.5" y="338.3" font-size="11.5" fill="#000" font-family='"Liberation Sans","IPAGothic","Noto Sans CJK JP",sans-serif' font-weight="normal" text-anchor="start" textLength="38.5" lengthAdjust="spacingAndGlyphs">1100.00</text>
<text x="525.5" y="338.3" font-size="11.5" fill="#000" font-family='"Liberation Sans","IPAGothic","Noto Sans CJK JP",sans-serif' font-weight="normal" text-anchor="start" textLength="34.0" lengthAdjust="spacingAndGlyphs">800.00</text>
<text x="576.0" y="338.3" font-size="11.5" fill="#000" font-family='"Liberation Sans","IPAGothic","Noto Sans CJK JP",sans-serif' font-weight="normal" text-anchor="start" textLength="27.0" lengthAdjust="spacingAndGlyphs">49.46</text>
<text x="631.0" y="338.3" font-size="11.5" fill="#000" font-family='"Liberation Sans","IPAGothic","Noto Sans CJK JP",sans-serif' font-weight="normal" text-anchor="start">3</text>
<text x="661.0" y="338.3" font-size="11.5" fill="#000" font-family='"Liberation Sans","IPAGothic","Noto Sans CJK JP",sans-serif' font-weight="normal" text-anchor="start">2</text>
<text x="691.0" y="338.3" font-size="11.5" fill="#000" font-family='"Liberation Sans","IPAGothic","Noto Sans CJK JP",sans-serif' font-weight="normal" text-anchor="start">6</text>
<g clip-path="url(#cl2)"><text x="766.0" y="338.3" font-size="12" fill="#000" font-family='"Liberation Sans","IPAGothic","Noto Sans CJK JP",sans-serif' font-weight="normal" text-anchor="start" textLength="34.0" lengthAdjust="spacingAndGlyphs">ｽﾄﾚｰﾄ</text></g>
<text x="410.5" y="357.3" font-size="12" fill="#fff" font-family='"Liberation Sans","IPAGothic","Noto Sans CJK JP",sans-serif' font-weight="normal" text-anchor="start" textLength="16.0" lengthAdjust="spacingAndGlyphs">L判</text>
<text x="435.5" y="357.3" font-size="12" fill="#fff" font-family='"Liberation Sans","IPAGothic","Noto Sans CJK JP",sans-serif' font-weight="normal" text-anchor="start" textLength="26.5" lengthAdjust="spacingAndGlyphs">ヨコ目</text>
<text x="481.5" y="357.3" font-size="11.5" fill="#fff" font-family='"Liberation Sans","IPAGothic","Noto Sans CJK JP",sans-serif' font-weight="normal" text-anchor="start" textLength="38.5" lengthAdjust="spacingAndGlyphs">1100.00</text>
<text x="525.5" y="357.3" font-size="11.5" fill="#fff" font-family='"Liberation Sans","IPAGothic","Noto Sans CJK JP",sans-serif' font-weight="normal" text-anchor="start" textLength="34.0" lengthAdjust="spacingAndGlyphs">800.00</text>
<text x="576.0" y="357.3" font-size="11.5" fill="#fff" font-family='"Liberation Sans","IPAGothic","Noto Sans CJK JP",sans-serif' font-weight="normal" text-anchor="start" textLength="27.0" lengthAdjust="spacingAndGlyphs">24.19</text>
<text x="631.0" y="357.3" font-size="11.5" fill="#fff" font-family='"Liberation Sans","IPAGothic","Noto Sans CJK JP",sans-serif' font-weight="normal" text-anchor="start">3</text>
<text x="661.0" y="357.3" font-size="11.5" fill="#fff" font-family='"Liberation Sans","IPAGothic","Noto Sans CJK JP",sans-serif' font-weight="normal" text-anchor="start">3</text>
<text x="691.0" y="357.3" font-size="11.5" fill="#fff" font-family='"Liberation Sans","IPAGothic","Noto Sans CJK JP",sans-serif' font-weight="normal" text-anchor="start">9</text>
<g clip-path="url(#cl2)"><text x="766.0" y="357.3" font-size="12" fill="#fff" font-family='"Liberation Sans","IPAGothic","Noto Sans CJK JP",sans-serif' font-weight="normal" text-anchor="start" textLength="73.0" lengthAdjust="spacingAndGlyphs">2列目入れ替え</text></g>
<text x="410.5" y="376.3" font-size="12" fill="#000" font-family='"Liberation Sans","IPAGothic","Noto Sans CJK JP",sans-serif' font-weight="normal" text-anchor="start" textLength="16.0" lengthAdjust="spacingAndGlyphs">L判</text>
<text x="435.5" y="376.3" font-size="12" fill="#000" font-family='"Liberation Sans","IPAGothic","Noto Sans CJK JP",sans-serif' font-weight="normal" text-anchor="start" textLength="26.5" lengthAdjust="spacingAndGlyphs">ヨコ目</text>
<text x="481.5" y="376.3" font-size="11.5" fill="#000" font-family='"Liberation Sans","IPAGothic","Noto Sans CJK JP",sans-serif' font-weight="normal" text-anchor="start" textLength="38.5" lengthAdjust="spacingAndGlyphs">1100.00</text>
<text x="525.5" y="376.3" font-size="11.5" fill="#000" font-family='"Liberation Sans","IPAGothic","Noto Sans CJK JP",sans-serif' font-weight="normal" text-anchor="start" textLength="34.0" lengthAdjust="spacingAndGlyphs">800.00</text>
<text x="576.0" y="376.3" font-size="11.5" fill="#000" font-family='"Liberation Sans","IPAGothic","Noto Sans CJK JP",sans-serif' font-weight="normal" text-anchor="start" textLength="27.0" lengthAdjust="spacingAndGlyphs">49.46</text>
<text x="631.0" y="376.3" font-size="11.5" fill="#000" font-family='"Liberation Sans","IPAGothic","Noto Sans CJK JP",sans-serif' font-weight="normal" text-anchor="start">3</text>
<text x="661.0" y="376.3" font-size="11.5" fill="#000" font-family='"Liberation Sans","IPAGothic","Noto Sans CJK JP",sans-serif' font-weight="normal" text-anchor="start">2</text>
<text x="691.0" y="376.3" font-size="11.5" fill="#000" font-family='"Liberation Sans","IPAGothic","Noto Sans CJK JP",sans-serif' font-weight="normal" text-anchor="start">6</text>
<g clip-path="url(#cl2)"><text x="766.0" y="376.3" font-size="12" fill="#000" font-family='"Liberation Sans","IPAGothic","Noto Sans CJK JP",sans-serif' font-weight="normal" text-anchor="start" textLength="117.0" lengthAdjust="spacingAndGlyphs">並んだ2列目の入れ替え</text></g>
<text x="410.5" y="395.3" font-size="12" fill="#000" font-family='"Liberation Sans","IPAGothic","Noto Sans CJK JP",sans-serif' font-weight="normal" text-anchor="start" textLength="16.0" lengthAdjust="spacingAndGlyphs">L判</text>
<text x="435.5" y="395.3" font-size="12" fill="#000" font-family='"Liberation Sans","IPAGothic","Noto Sans CJK JP",sans-serif' font-weight="normal" text-anchor="start" textLength="26.5" lengthAdjust="spacingAndGlyphs">ヨコ目</text>
<text x="481.5" y="395.3" font-size="11.5" fill="#000" font-family='"Liberation Sans","IPAGothic","Noto Sans CJK JP",sans-serif' font-weight="normal" text-anchor="start" textLength="38.5" lengthAdjust="spacingAndGlyphs">1100.00</text>
<text x="525.5" y="395.3" font-size="11.5" fill="#000" font-family='"Liberation Sans","IPAGothic","Noto Sans CJK JP",sans-serif' font-weight="normal" text-anchor="start" textLength="34.0" lengthAdjust="spacingAndGlyphs">800.00</text>
<text x="576.0" y="395.3" font-size="11.5" fill="#000" font-family='"Liberation Sans","IPAGothic","Noto Sans CJK JP",sans-serif' font-weight="normal" text-anchor="start" textLength="27.0" lengthAdjust="spacingAndGlyphs">49.46</text>
<text x="631.0" y="395.3" font-size="11.5" fill="#000" font-family='"Liberation Sans","IPAGothic","Noto Sans CJK JP",sans-serif' font-weight="normal" text-anchor="start">3</text>
<text x="661.0" y="395.3" font-size="11.5" fill="#000" font-family='"Liberation Sans","IPAGothic","Noto Sans CJK JP",sans-serif' font-weight="normal" text-anchor="start">2</text>
<text x="691.0" y="395.3" font-size="11.5" fill="#000" font-family='"Liberation Sans","IPAGothic","Noto Sans CJK JP",sans-serif' font-weight="normal" text-anchor="start">6</text>
<g clip-path="url(#cl2)"><text x="766.0" y="395.3" font-size="12" fill="#000" font-family='"Liberation Sans","IPAGothic","Noto Sans CJK JP",sans-serif' font-weight="normal" text-anchor="start" textLength="96.0" lengthAdjust="spacingAndGlyphs">2番目colの入れ替え</text></g>
<text x="410.5" y="414.3" font-size="12" fill="#000" font-family='"Liberation Sans","IPAGothic","Noto Sans CJK JP",sans-serif' font-weight="normal" text-anchor="start" textLength="16.0" lengthAdjust="spacingAndGlyphs">L判</text>
<text x="435.5" y="414.3" font-size="12" fill="#000" font-family='"Liberation Sans","IPAGothic","Noto Sans CJK JP",sans-serif' font-weight="normal" text-anchor="start" textLength="26.5" lengthAdjust="spacingAndGlyphs">ヨコ目</text>
<text x="481.5" y="414.3" font-size="11.5" fill="#000" font-family='"Liberation Sans","IPAGothic","Noto Sans CJK JP",sans-serif' font-weight="normal" text-anchor="start" textLength="38.5" lengthAdjust="spacingAndGlyphs">1100.00</text>
<text x="525.5" y="414.3" font-size="11.5" fill="#000" font-family='"Liberation Sans","IPAGothic","Noto Sans CJK JP",sans-serif' font-weight="normal" text-anchor="start" textLength="34.0" lengthAdjust="spacingAndGlyphs">800.00</text>
<text x="576.0" y="414.3" font-size="11.5" fill="#000" font-family='"Liberation Sans","IPAGothic","Noto Sans CJK JP",sans-serif' font-weight="normal" text-anchor="start" textLength="27.0" lengthAdjust="spacingAndGlyphs">49.46</text>
<text x="631.0" y="414.3" font-size="11.5" fill="#000" font-family='"Liberation Sans","IPAGothic","Noto Sans CJK JP",sans-serif' font-weight="normal" text-anchor="start">3</text>
<text x="661.0" y="414.3" font-size="11.5" fill="#000" font-family='"Liberation Sans","IPAGothic","Noto Sans CJK JP",sans-serif' font-weight="normal" text-anchor="start">2</text>
<text x="691.0" y="414.3" font-size="11.5" fill="#000" font-family='"Liberation Sans","IPAGothic","Noto Sans CJK JP",sans-serif' font-weight="normal" text-anchor="start">6</text>
<g clip-path="url(#cl2)"><text x="766.0" y="414.3" font-size="12" fill="#000" font-family='"Liberation Sans","IPAGothic","Noto Sans CJK JP",sans-serif' font-weight="normal" text-anchor="start" textLength="140.0" lengthAdjust="spacingAndGlyphs">並んだ2番目colの入れ替え</text></g>
<text x="410.5" y="433.3" font-size="12" fill="#000" font-family='"Liberation Sans","IPAGothic","Noto Sans CJK JP",sans-serif' font-weight="normal" text-anchor="start" textLength="16.0" lengthAdjust="spacingAndGlyphs">L判</text>
<text x="435.5" y="433.3" font-size="12" fill="#000" font-family='"Liberation Sans","IPAGothic","Noto Sans CJK JP",sans-serif' font-weight="normal" text-anchor="start" textLength="26.5" lengthAdjust="spacingAndGlyphs">タテ目</text>
<text x="481.0" y="433.3" font-size="11.5" fill="#000" font-family='"Liberation Sans","IPAGothic","Noto Sans CJK JP",sans-serif' font-weight="normal" text-anchor="start" textLength="33.5" lengthAdjust="spacingAndGlyphs">800.00</text>
<text x="526.5" y="433.3" font-size="11.5" fill="#000" font-family='"Liberation Sans","IPAGothic","Noto Sans CJK JP",sans-serif' font-weight="normal" text-anchor="start" textLength="38.5" lengthAdjust="spacingAndGlyphs">1100.00</text>
<text x="576.0" y="433.3" font-size="11.5" fill="#000" font-family='"Liberation Sans","IPAGothic","Noto Sans CJK JP",sans-serif' font-weight="normal" text-anchor="start" textLength="27.0" lengthAdjust="spacingAndGlyphs">49.46</text>
<text x="631.0" y="433.3" font-size="11.5" fill="#000" font-family='"Liberation Sans","IPAGothic","Noto Sans CJK JP",sans-serif' font-weight="normal" text-anchor="start">3</text>
<text x="661.0" y="433.3" font-size="11.5" fill="#000" font-family='"Liberation Sans","IPAGothic","Noto Sans CJK JP",sans-serif' font-weight="normal" text-anchor="start">2</text>
<text x="691.0" y="433.3" font-size="11.5" fill="#000" font-family='"Liberation Sans","IPAGothic","Noto Sans CJK JP",sans-serif' font-weight="normal" text-anchor="start">6</text>
<g clip-path="url(#cl2)"><text x="766.0" y="433.3" font-size="12" fill="#000" font-family='"Liberation Sans","IPAGothic","Noto Sans CJK JP",sans-serif' font-weight="normal" text-anchor="start" textLength="34.0" lengthAdjust="spacingAndGlyphs">ｽﾄﾚｰﾄ</text></g>
<text x="410.5" y="452.3" font-size="12" fill="#000" font-family='"Liberation Sans","IPAGothic","Noto Sans CJK JP",sans-serif' font-weight="normal" text-anchor="start" textLength="16.0" lengthAdjust="spacingAndGlyphs">L判</text>
<text x="435.5" y="452.3" font-size="12" fill="#000" font-family='"Liberation Sans","IPAGothic","Noto Sans CJK JP",sans-serif' font-weight="normal" text-anchor="start" textLength="26.5" lengthAdjust="spacingAndGlyphs">タテ目</text>
<text x="481.0" y="452.3" font-size="11.5" fill="#000" font-family='"Liberation Sans","IPAGothic","Noto Sans CJK JP",sans-serif' font-weight="normal" text-anchor="start" textLength="33.5" lengthAdjust="spacingAndGlyphs">800.00</text>
<text x="526.5" y="452.3" font-size="11.5" fill="#000" font-family='"Liberation Sans","IPAGothic","Noto Sans CJK JP",sans-serif' font-weight="normal" text-anchor="start" textLength="38.5" lengthAdjust="spacingAndGlyphs">1100.00</text>
<text x="576.0" y="452.3" font-size="11.5" fill="#000" font-family='"Liberation Sans","IPAGothic","Noto Sans CJK JP",sans-serif' font-weight="normal" text-anchor="start" textLength="27.0" lengthAdjust="spacingAndGlyphs">32.62</text>
<text x="631.0" y="452.3" font-size="11.5" fill="#000" font-family='"Liberation Sans","IPAGothic","Noto Sans CJK JP",sans-serif' font-weight="normal" text-anchor="start">4</text>
<text x="661.0" y="452.3" font-size="11.5" fill="#000" font-family='"Liberation Sans","IPAGothic","Noto Sans CJK JP",sans-serif' font-weight="normal" text-anchor="start">2</text>
<text x="691.0" y="452.3" font-size="11.5" fill="#000" font-family='"Liberation Sans","IPAGothic","Noto Sans CJK JP",sans-serif' font-weight="normal" text-anchor="start">8</text>
<g clip-path="url(#cl2)"><text x="766.0" y="452.3" font-size="12" fill="#000" font-family='"Liberation Sans","IPAGothic","Noto Sans CJK JP",sans-serif' font-weight="normal" text-anchor="start" textLength="73.0" lengthAdjust="spacingAndGlyphs">2列目入れ替え</text></g>
<text x="410.5" y="471.3" font-size="12" fill="#000" font-family='"Liberation Sans","IPAGothic","Noto Sans CJK JP",sans-serif' font-weight="normal" text-anchor="start" textLength="16.0" lengthAdjust="spacingAndGlyphs">L判</text>
<text x="435.5" y="471.3" font-size="12" fill="#000" font-family='"Liberation Sans","IPAGothic","Noto Sans CJK JP",sans-serif' font-weight="normal" text-anchor="start" textLength="26.5" lengthAdjust="spacingAndGlyphs">タテ目</text>
<text x="481.0" y="471.3" font-size="11.5" fill="#000" font-family='"Liberation Sans","IPAGothic","Noto Sans CJK JP",sans-serif' font-weight="normal" text-anchor="start" textLength="33.5" lengthAdjust="spacingAndGlyphs">800.00</text>
<text x="526.5" y="471.3" font-size="11.5" fill="#000" font-family='"Liberation Sans","IPAGothic","Noto Sans CJK JP",sans-serif' font-weight="normal" text-anchor="start" textLength="38.5" lengthAdjust="spacingAndGlyphs">1100.00</text>
<text x="576.0" y="471.3" font-size="11.5" fill="#000" font-family='"Liberation Sans","IPAGothic","Noto Sans CJK JP",sans-serif' font-weight="normal" text-anchor="start" textLength="27.0" lengthAdjust="spacingAndGlyphs">49.46</text>
<text x="631.0" y="471.3" font-size="11.5" fill="#000" font-family='"Liberation Sans","IPAGothic","Noto Sans CJK JP",sans-serif' font-weight="normal" text-anchor="start">3</text>
<text x="661.0" y="471.3" font-size="11.5" fill="#000" font-family='"Liberation Sans","IPAGothic","Noto Sans CJK JP",sans-serif' font-weight="normal" text-anchor="start">2</text>
<text x="691.0" y="471.3" font-size="11.5" fill="#000" font-family='"Liberation Sans","IPAGothic","Noto Sans CJK JP",sans-serif' font-weight="normal" text-anchor="start">6</text>
<g clip-path="url(#cl2)"><text x="766.0" y="471.3" font-size="12" fill="#000" font-family='"Liberation Sans","IPAGothic","Noto Sans CJK JP",sans-serif' font-weight="normal" text-anchor="start" textLength="117.0" lengthAdjust="spacingAndGlyphs">並んだ2列目の入れ替え</text></g>
<rect x="409" y="502" width="340" height="251" fill="#fff"/>
<g fill="none" stroke="#000" stroke-width="1" shape-rendering="crispEdges"><g transform="translate(487.6 509.3) scale(0.1361 0.1383) translate(-827.5 -180.5)"><path d="M474.5 347.5L698.6 347.5L698.6 334.3L704.3 328.4L711.7 272Q714 256 731.9 254.5L827.5 254.5L827.5 204A24 23.5 0 0 1 851.6 180.5L1030 180.5Q1046 183 1048.5 203L1048.5 254.5L1144.4 254.5Q1162 256 1164.6 272L1172 328.4L1177.5 334.3L1177.5 691L1172 696.8L1165 751Q1162 770 1144.8 771.5L1048.5 771.5L1048.5 822.8Q1046 843 1026.6 845.5L849 845.5A21.5 23 0 0 1 827.5 822L827.5 771.5L731.9 771.5Q714 770 711.7 751L704.3 696.8L698.6 691L698.6 678.5L474.5 678.5L441.5 667.5L441.5 358.5Z" vector-effect="non-scaling-stroke"/><path d="M827.5 254.5V347.5M1048.5 254.5V347.5M827.5 678.5V771.5M1048.5 678.5V771.5M827.5 213.7H846V222M1048.5 213.5H1030V222M827.5 811.5H845.4V803M1048.5 812.5H1030.5V803" vector-effect="non-scaling-stroke"/></g><g transform="translate(590.5 509.3) scale(0.1361 0.1383) translate(-827.5 -180.5)"><path d="M474.5 347.5L698.6 347.5L698.6 334.3L704.3 328.4L711.7 272Q714 256 731.9 254.5L827.5 254.5L827.5 204A24 23.5 0 0 1 851.6 180.5L1030 180.5Q1046 183 1048.5 203L1048.5 254.5L1144.4 254.5Q1162 256 1164.6 272L1172 328.4L1177.5 334.3L1177.5 691L1172 696.8L1165 751Q1162 770 1144.8 771.5L1048.5 771.5L1048.5 822.8Q1046 843 1026.6 845.5L849 845.5A21.5 23 0 0 1 827.5 822L827.5 771.5L731.9 771.5Q714 770 711.7 751L704.3 696.8L698.6 691L698.6 678.5L474.5 678.5L441.5 667.5L441.5 358.5Z" vector-effect="non-scaling-stroke"/><path d="M827.5 254.5V347.5M1048.5 254.5V347.5M827.5 678.5V771.5M1048.5 678.5V771.5M827.5 213.7H846V222M1048.5 213.5H1030V222M827.5 811.5H845.4V803M1048.5 812.5H1030.5V803" vector-effect="non-scaling-stroke"/></g><g transform="translate(693.4 509.3) scale(0.1361 0.1383) translate(-827.5 -180.5)"><path d="M474.5 347.5L698.6 347.5L698.6 334.3L704.3 328.4L711.7 272Q714 256 731.9 254.5L827.5 254.5L827.5 204A24 23.5 0 0 1 851.6 180.5L1030 180.5Q1046 183 1048.5 203L1048.5 254.5L1144.4 254.5Q1162 256 1164.6 272L1172 328.4L1177.5 334.3L1177.5 691L1172 696.8L1165 751Q1162 770 1144.8 771.5L1048.5 771.5L1048.5 822.8Q1046 843 1026.6 845.5L849 845.5A21.5 23 0 0 1 827.5 822L827.5 771.5L731.9 771.5Q714 770 711.7 751L704.3 696.8L698.6 691L698.6 678.5L474.5 678.5L441.5 667.5L441.5 358.5Z" vector-effect="non-scaling-stroke"/><path d="M827.5 254.5V347.5M1048.5 254.5V347.5M827.5 678.5V771.5M1048.5 678.5V771.5M827.5 213.7H846V222M1048.5 213.5H1030V222M827.5 811.5H845.4V803M1048.5 812.5H1030.5V803" vector-effect="non-scaling-stroke"/></g><g transform="translate(487.6 653.4) scale(0.1361 0.1383) translate(-827.5 -180.5)"><path d="M474.5 347.5L698.6 347.5L698.6 334.3L704.3 328.4L711.7 272Q714 256 731.9 254.5L827.5 254.5L827.5 204A24 23.5 0 0 1 851.6 180.5L1030 180.5Q1046 183 1048.5 203L1048.5 254.5L1144.4 254.5Q1162 256 1164.6 272L1172 328.4L1177.5 334.3L1177.5 691L1172 696.8L1165 751Q1162 770 1144.8 771.5L1048.5 771.5L1048.5 822.8Q1046 843 1026.6 845.5L849 845.5A21.5 23 0 0 1 827.5 822L827.5 771.5L731.9 771.5Q714 770 711.7 751L704.3 696.8L698.6 691L698.6 678.5L474.5 678.5L441.5 667.5L441.5 358.5Z" vector-effect="non-scaling-stroke"/><path d="M827.5 254.5V347.5M1048.5 254.5V347.5M827.5 678.5V771.5M1048.5 678.5V771.5M827.5 213.7H846V222M1048.5 213.5H1030V222M827.5 811.5H845.4V803M1048.5 812.5H1030.5V803" vector-effect="non-scaling-stroke"/></g><g transform="translate(590.5 653.4) scale(0.1361 0.1383) translate(-827.5 -180.5)"><path d="M474.5 347.5L698.6 347.5L698.6 334.3L704.3 328.4L711.7 272Q714 256 731.9 254.5L827.5 254.5L827.5 204A24 23.5 0 0 1 851.6 180.5L1030 180.5Q1046 183 1048.5 203L1048.5 254.5L1144.4 254.5Q1162 256 1164.6 272L1172 328.4L1177.5 334.3L1177.5 691L1172 696.8L1165 751Q1162 770 1144.8 771.5L1048.5 771.5L1048.5 822.8Q1046 843 1026.6 845.5L849 845.5A21.5 23 0 0 1 827.5 822L827.5 771.5L731.9 771.5Q714 770 711.7 751L704.3 696.8L698.6 691L698.6 678.5L474.5 678.5L441.5 667.5L441.5 358.5Z" vector-effect="non-scaling-stroke"/><path d="M827.5 254.5V347.5M1048.5 254.5V347.5M827.5 678.5V771.5M1048.5 678.5V771.5M827.5 213.7H846V222M1048.5 213.5H1030V222M827.5 811.5H845.4V803M1048.5 812.5H1030.5V803" vector-effect="non-scaling-stroke"/></g><g transform="translate(693.4 653.4) scale(0.1361 0.1383) translate(-827.5 -180.5)"><path d="M474.5 347.5L698.6 347.5L698.6 334.3L704.3 328.4L711.7 272Q714 256 731.9 254.5L827.5 254.5L827.5 204A24 23.5 0 0 1 851.6 180.5L1030 180.5Q1046 183 1048.5 203L1048.5 254.5L1144.4 254.5Q1162 256 1164.6 272L1172 328.4L1177.5 334.3L1177.5 691L1172 696.8L1165 751Q1162 770 1144.8 771.5L1048.5 771.5L1048.5 822.8Q1046 843 1026.6 845.5L849 845.5A21.5 23 0 0 1 827.5 822L827.5 771.5L731.9 771.5Q714 770 711.7 751L704.3 696.8L698.6 691L698.6 678.5L474.5 678.5L441.5 667.5L441.5 358.5Z" vector-effect="non-scaling-stroke"/><path d="M827.5 254.5V347.5M1048.5 254.5V347.5M827.5 678.5V771.5M1048.5 678.5V771.5M827.5 213.7H846V222M1048.5 213.5H1030V222M827.5 811.5H845.4V803M1048.5 812.5H1030.5V803" vector-effect="non-scaling-stroke"/></g><g transform="translate(464.7 672.4) scale(-0.1361 -0.1383) translate(-827.5 -180.5)"><path d="M474.5 347.5L698.6 347.5L698.6 334.3L704.3 328.4L711.7 272Q714 256 731.9 254.5L827.5 254.5L827.5 204A24 23.5 0 0 1 851.6 180.5L1030 180.5Q1046 183 1048.5 203L1048.5 254.5L1144.4 254.5Q1162 256 1164.6 272L1172 328.4L1177.5 334.3L1177.5 691L1172 696.8L1165 751Q1162 770 1144.8 771.5L1048.5 771.5L1048.5 822.8Q1046 843 1026.6 845.5L849 845.5A21.5 23 0 0 1 827.5 822L827.5 771.5L731.9 771.5Q714 770 711.7 751L704.3 696.8L698.6 691L698.6 678.5L474.5 678.5L441.5 667.5L441.5 358.5Z" vector-effect="non-scaling-stroke"/><path d="M827.5 254.5V347.5M1048.5 254.5V347.5M827.5 678.5V771.5M1048.5 678.5V771.5M827.5 213.7H846V222M1048.5 213.5H1030V222M827.5 811.5H845.4V803M1048.5 812.5H1030.5V803" vector-effect="non-scaling-stroke"/></g><g transform="translate(567.6 672.4) scale(-0.1361 -0.1383) translate(-827.5 -180.5)"><path d="M474.5 347.5L698.6 347.5L698.6 334.3L704.3 328.4L711.7 272Q714 256 731.9 254.5L827.5 254.5L827.5 204A24 23.5 0 0 1 851.6 180.5L1030 180.5Q1046 183 1048.5 203L1048.5 254.5L1144.4 254.5Q1162 256 1164.6 272L1172 328.4L1177.5 334.3L1177.5 691L1172 696.8L1165 751Q1162 770 1144.8 771.5L1048.5 771.5L1048.5 822.8Q1046 843 1026.6 845.5L849 845.5A21.5 23 0 0 1 827.5 822L827.5 771.5L731.9 771.5Q714 770 711.7 751L704.3 696.8L698.6 691L698.6 678.5L474.5 678.5L441.5 667.5L441.5 358.5Z" vector-effect="non-scaling-stroke"/><path d="M827.5 254.5V347.5M1048.5 254.5V347.5M827.5 678.5V771.5M1048.5 678.5V771.5M827.5 213.7H846V222M1048.5 213.5H1030V222M827.5 811.5H845.4V803M1048.5 812.5H1030.5V803" vector-effect="non-scaling-stroke"/></g><g transform="translate(670.5 672.4) scale(-0.1361 -0.1383) translate(-827.5 -180.5)"><path d="M474.5 347.5L698.6 347.5L698.6 334.3L704.3 328.4L711.7 272Q714 256 731.9 254.5L827.5 254.5L827.5 204A24 23.5 0 0 1 851.6 180.5L1030 180.5Q1046 183 1048.5 203L1048.5 254.5L1144.4 254.5Q1162 256 1164.6 272L1172 328.4L1177.5 334.3L1177.5 691L1172 696.8L1165 751Q1162 770 1144.8 771.5L1048.5 771.5L1048.5 822.8Q1046 843 1026.6 845.5L849 845.5A21.5 23 0 0 1 827.5 822L827.5 771.5L731.9 771.5Q714 770 711.7 751L704.3 696.8L698.6 691L698.6 678.5L474.5 678.5L441.5 667.5L441.5 358.5Z" vector-effect="non-scaling-stroke"/><path d="M827.5 254.5V347.5M1048.5 254.5V347.5M827.5 678.5V771.5M1048.5 678.5V771.5M827.5 213.7H846V222M1048.5 213.5H1030V222M827.5 811.5H845.4V803M1048.5 812.5H1030.5V803" vector-effect="non-scaling-stroke"/></g></g>
<rect x="413.5" y="507.2" width="331.2" height="238.2" fill="none" stroke="#2a1c9c" stroke-width="1.5" stroke-dasharray="9 3 2 3" shape-rendering="crispEdges"/>
<path d="M413.5 747.8H747.2V507" fill="none" stroke="#d79be0" stroke-width="1" stroke-dasharray="5 2"/>
<rect x="759.5" y="508" width="158" height="95" fill="none" stroke="#dcdcdc"/><rect x="765" y="502" width="26" height="12" fill="#f1f1f1"/><text x="768.0" y="512.0" font-size="12" fill="#000" font-family='"Liberation Sans","IPAGothic","Noto Sans CJK JP",sans-serif' font-weight="normal" text-anchor="start" textLength="20.0" lengthAdjust="spacingAndGlyphs">ｼｰﾄ</text>
<rect x="759.5" y="619.5" width="158" height="95.5" fill="none" stroke="#dcdcdc"/><rect x="765" y="613.5" width="40" height="12" fill="#f1f1f1"/><text x="768.0" y="623.5" font-size="12" fill="#000" font-family='"Liberation Sans","IPAGothic","Noto Sans CJK JP",sans-serif' font-weight="normal" text-anchor="start" textLength="34.0" lengthAdjust="spacingAndGlyphs">ﾃﾞｻﾞｲﾝ</text>
<path d="M775 526.5H791M775 526.5L780 524.2M791 526.5L786.5 528.7" stroke="#222" stroke-width="1" fill="none"/>
<text x="822.0" y="540.0" font-size="12" fill="#000" font-family='"Liberation Sans","IPAGothic","Noto Sans CJK JP",sans-serif' font-weight="normal" text-anchor="start" textLength="26.5" lengthAdjust="spacingAndGlyphs">縮小:</text>
<rect x="821" y="548.5" width="79" height="21.0" fill="#f3f3f3" stroke="#e0e0e0"/><path d="M821 569.5H900" stroke="#8a8a8a"/>
<rect x="821" y="576" width="79" height="20.5" fill="#f3f3f3" stroke="#e0e0e0"/><path d="M821 596.5H900" stroke="#8a8a8a"/>
<text x="786.5" y="563.0" font-size="10.8" fill="#000" font-family='"Liberation Sans","IPAGothic","Noto Sans CJK JP",sans-serif' font-weight="normal" text-anchor="start">X:</text>
<text x="786.5" y="590.2" font-size="10.8" fill="#000" font-family='"Liberation Sans","IPAGothic","Noto Sans CJK JP",sans-serif' font-weight="normal" text-anchor="start">Y:</text>
<text x="823.5" y="561.0" font-size="11.5" fill="#000" font-family='"Liberation Sans","IPAGothic","Noto Sans CJK JP",sans-serif' font-weight="normal" text-anchor="start" textLength="21.5" lengthAdjust="spacingAndGlyphs">0.00</text>
<text x="823.5" y="588.2" font-size="11.5" fill="#000" font-family='"Liberation Sans","IPAGothic","Noto Sans CJK JP",sans-serif' font-weight="normal" text-anchor="start" textLength="21.5" lengthAdjust="spacingAndGlyphs">0.00</text>
<text x="822.0" y="652.0" font-size="12" fill="#000" font-family='"Liberation Sans","IPAGothic","Noto Sans CJK JP",sans-serif' font-weight="normal" text-anchor="start" textLength="26.5" lengthAdjust="spacingAndGlyphs">縮小:</text>
<rect x="821" y="660" width="79" height="21" fill="#f3f3f3" stroke="#e0e0e0"/><path d="M821 681H900" stroke="#8a8a8a"/>
<rect x="821" y="689.5" width="79" height="20.5" fill="#f3f3f3" stroke="#e0e0e0"/><path d="M821 710H900" stroke="#8a8a8a"/>
<text x="786.5" y="674.5" font-size="10.8" fill="#000" font-family='"Liberation Sans","IPAGothic","Noto Sans CJK JP",sans-serif' font-weight="normal" text-anchor="start">X:</text>
<text x="786.5" y="703.8" font-size="10.8" fill="#000" font-family='"Liberation Sans","IPAGothic","Noto Sans CJK JP",sans-serif' font-weight="normal" text-anchor="start">Y:</text>
<text x="823.5" y="672.5" font-size="11.5" fill="#000" font-family='"Liberation Sans","IPAGothic","Noto Sans CJK JP",sans-serif' font-weight="normal" text-anchor="start" textLength="21.5" lengthAdjust="spacingAndGlyphs">0.00</text>
<text x="823.5" y="701.8" font-size="11.5" fill="#000" font-family='"Liberation Sans","IPAGothic","Noto Sans CJK JP",sans-serif' font-weight="normal" text-anchor="start" textLength="21.5" lengthAdjust="spacingAndGlyphs">0.00</text>
<rect x="758" y="731.5" width="79" height="20" rx="4" fill="#fdfdfd" stroke="#d0d0d0"/>
<rect x="843.5" y="731.5" width="79" height="20" rx="4" fill="#fdfdfd" stroke="#d0d0d0"/>
<text x="763.0" y="746.3" font-size="12" fill="#000" font-family='"Liberation Sans","IPAGothic","Noto Sans CJK JP",sans-serif' font-weight="normal" text-anchor="start" textLength="68.0" lengthAdjust="spacingAndGlyphs">ﾚｲｱｳﾄの作成</text>
<text x="864.0" y="746.3" font-size="12" fill="#000" font-family='"Liberation Sans","IPAGothic","Noto Sans CJK JP",sans-serif' font-weight="normal" text-anchor="start" textLength="36.5" lengthAdjust="spacingAndGlyphs">ｷｬﾝｾﾙ</text></svg>
</body></html>
